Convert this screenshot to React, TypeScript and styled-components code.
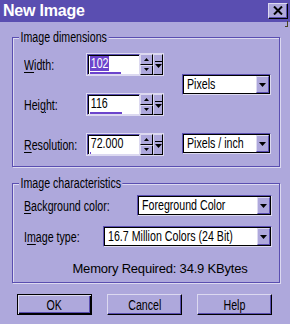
import styled, { createGlobalStyle } from "styled-components";

const face = "#aea8dc";
const shadow = "#5a4eb1";
const light = "#dcd9f0";
const select = "#6c44cc";

// the dialog font is a tall, narrow sans; Liberation Sans squeezed to fit
const narrow = `
  display: inline-block;
  white-space: nowrap;
  font-size: 14px;
  transform: scaleX(0.76);
`;

const GlobalStyle = createGlobalStyle`
  html, body {
    margin: 0;
    padding: 0;
    background: ${face};
  }
  body {
    font-family: "Liberation Sans", Arial, sans-serif;
    font-size: 13px;
    color: #000;
  }
`;

function DownArrow() {
  return (
    <svg width="7" height="4" viewBox="0 0 7 4">
      <path d="M0 0h7L3.5 4z" fill="#000" />
    </svg>
  );
}

function UpArrow() {
  return (
    <svg width="5" height="3" viewBox="0 0 5 3">
      <path d="M0 3h5L2.5 0z" fill="#000" />
    </svg>
  );
}

function SmallDown() {
  return (
    <svg width="5" height="3" viewBox="0 0 5 3">
      <path d="M0 0h5L2.5 3z" fill="#000" />
    </svg>
  );
}

function BarArrow() {
  return (
    <svg width="7" height="7" viewBox="0 0 7 7">
      <rect x="0" y="0" width="7" height="1" fill="#000" />
      <path d="M0 3h7L3.5 7z" fill="#000" />
    </svg>
  );
}

type SpinBoxProps = {
  value: string;
  progress: number;
  selected?: boolean;
};

function SpinBox({ value, progress, selected }: SpinBoxProps) {
  return (
    <SpinFrame>
      <Field>
        <FieldText $selected={selected}>{value}</FieldText>
        <Progress>
          <ProgressFill style={{ width: `${progress}%` }} />
        </Progress>
      </Field>
      <Spinner>
        <SpinButton>
          <UpArrow />
        </SpinButton>
        <SpinButton>
          <SmallDown />
        </SpinButton>
      </Spinner>
      <MiniButton>
        <BarArrow />
      </MiniButton>
    </SpinFrame>
  );
}

type DropdownProps = {
  value: string;
  $width?: number;
};

function Dropdown({ value, $width }: DropdownProps) {
  return (
    <SelectBox $width={$width}>
      <SelectText>
        <NarrowText>{value}</NarrowText>
      </SelectText>
      <ArrowButton>
        <DownArrow />
      </ArrowButton>
    </SelectBox>
  );
}

export default function App() {
  return (
    <>
      <GlobalStyle />
      <Dialog>
        <TitleBar>
          <Title>New Image</Title>
          <CloseButton>
            <svg width="10" height="9" viewBox="0 0 10 9">
              <path d="M1 0.5l8 8M9 0.5l-8 8" stroke="#000" strokeWidth="2" />
            </svg>
          </CloseButton>
        </TitleBar>
        <Corner />
        <Body>
          <Group>
            <Legend>Image dimensions</Legend>
            <DimGrid>
              <Label>
                <u>W</u>idth:
              </Label>
              <SpinBox value="102" progress={64} selected />
              <UnitCell $span>
                <Dropdown value="Pixels" />
              </UnitCell>
              <Label>
                Hei<u>g</u>ht:
              </Label>
              <SpinBox value="116" progress={66} />
              <Label>
                <u>R</u>esolution:
              </Label>
              <SpinBox value="72.000" progress={2} />
              <UnitCell>
                <Dropdown value="Pixels / inch" />
              </UnitCell>
            </DimGrid>
          </Group>
          <Group $gap={16}>
            <Legend>Image characteristics</Legend>
            <CharRow $top={4}>
              <Label>
                <u>B</u>ackground color:
              </Label>
              <Dropdown value="Foreground Color" $width={136} />
            </CharRow>
            <CharRow $top={10}>
              <Label>
                I<u>m</u>age type:
              </Label>
              <Dropdown value="16.7 Million Colors (24 Bit)" $width={169} />
            </CharRow>
            <Memory>Memory Required: 34.9 KBytes</Memory>
          </Group>
          <ButtonRow>
            <Button $default>
              <NarrowText $center>OK</NarrowText>
            </Button>
            <Button>
              <NarrowText $center>Cancel</NarrowText>
            </Button>
            <Button>
              <NarrowText $center>Help</NarrowText>
            </Button>
          </ButtonRow>
        </Body>
      </Dialog>
    </>
  );
}

const Dialog = styled.div`
  position: relative;
  width: 290px;
  height: 324px;
  background: ${face};
  overflow: hidden;
`;

const TitleBar = styled.div`
  height: 22px;
  background: ${shadow};
  display: flex;
  align-items: center;
  justify-content: space-between;
  padding: 0 2px 0 3px;
`;

const Title = styled.div`
  font-weight: bold;
  font-size: 16px;
  color: #fff;
  letter-spacing: -0.2px;
`;

const CloseButton = styled.div`
  width: 18px;
  height: 14px;
  background: ${face};
  border: 1px solid;
  border-color: ${light} #000 #000 ${light};
  box-shadow: inset -1px -1px 0 ${shadow};
  display: flex;
  align-items: center;
  justify-content: center;
  margin-top: -1px;
`;

const Corner = styled.div`
  position: absolute;
  top: 21px;
  right: 2px;
  width: 2px;
  height: 5px;
  border-right: 1px solid #4a4420;
  border-bottom: 1px solid #4a4420;
`;

const Body = styled.div`
  padding: 0 10px 0 12px;
`;

const Group = styled.div<{ $gap?: number }>`
  margin-top: ${(p) => p.$gap ?? 15}px;
  border: 1px solid ${shadow};
  box-shadow: inset 1px 1px 0 ${light}, 1px 1px 0 ${light};
  padding: 0 7px 10px 11px;
`;

const Legend = styled.div`
  ${narrow}
  transform-origin: left center;
  display: block;
  width: fit-content;
  margin: -8px 0 0 -5px;
  padding: 0 2px;
  height: 15px;
  line-height: 15px;
  background: ${face};
  position: relative;
`;

const DimGrid = styled.div`
  margin-top: 8px;
  display: grid;
  grid-template-columns: 62px 96px 89px;
  grid-template-rows: 23px 23px 23px;
  row-gap: 17px;
  align-items: center;
`;

const Label = styled.div`
  ${narrow}
  transform-origin: left center;
  u {
    text-decoration-thickness: 1px;
    text-underline-offset: 2px;
  }
`;

const NarrowText = styled.span<{ $center?: boolean }>`
  ${narrow}
  transform-origin: ${(p) => (p.$center ? "center" : "left")} center;
`;

const UnitCell = styled.div<{ $span?: boolean }>`
  grid-column: 3;
  grid-row: ${(p) => (p.$span ? "1 / span 2" : "3")};
  align-self: ${(p) => (p.$span ? "center" : "start")};
`;

const SpinFrame = styled.div`
  width: 78px;
  height: 23px;
  box-sizing: border-box;
  display: flex;
  border: 1px solid ${light};
`;

const Field = styled.div`
  width: 53px;
  box-sizing: border-box;
  background: #fff;
  border: 1px solid;
  border-color: ${shadow} ${light} ${light} ${shadow};
  box-shadow: inset 1px 1px 0 #000;
  padding: 1px 0 0 2px;
  display: flex;
  flex-direction: column;
  justify-content: space-between;
`;

const FieldText = styled.span<{ $selected?: boolean }>`
  ${narrow}
  transform-origin: left center;
  align-self: flex-start;
  line-height: 15px;
  padding: 0 1px;
  background: ${(p) => (p.$selected ? select : "transparent")};
  color: ${(p) => (p.$selected ? "#fff" : "#000")};
`;

const Progress = styled.div`
  height: 2px;
`;

const ProgressFill = styled.div`
  height: 100%;
  background: ${select};
`;

const Spinner = styled.div`
  width: 13px;
  display: flex;
  flex-direction: column;
`;

const SpinButton = styled.div`
  flex: 1;
  background: ${face};
  border: 1px solid;
  border-color: ${light} #000 #000 ${light};
  display: flex;
  align-items: center;
  justify-content: center;
`;

const MiniButton = styled.div`
  width: 10px;
  box-sizing: border-box;
  background: ${face};
  border: 1px solid;
  border-color: ${light} #000 #000 ${light};
  display: flex;
  align-items: center;
  justify-content: center;
`;

const SelectBox = styled.div<{ $width?: number }>`
  width: ${(p) => (p.$width ? `${p.$width}px` : "89px")};
  height: 21px;
  box-sizing: border-box;
  background: #fff;
  border: 1px solid;
  border-color: ${shadow} ${light} ${light} ${shadow};
  box-shadow: inset 1px 1px 0 #000, inset -1px -1px 0 #000;
  display: flex;
  align-items: stretch;
  padding: 1px;
`;

const SelectText = styled.div`
  flex: 1;
  min-width: 0;
  padding-left: 3px;
  line-height: 17px;
  white-space: nowrap;
  overflow: hidden;
`;

const ArrowButton = styled.div`
  width: 13px;
  flex: none;
  box-sizing: border-box;
  background: ${face};
  border: 1px solid;
  border-color: ${light} ${shadow} ${shadow} ${light};
  display: flex;
  align-items: center;
  justify-content: center;
`;

const CharRow = styled.div<{ $top: number }>`
  margin-top: ${(p) => p.$top}px;
  display: flex;
  align-items: center;
  justify-content: space-between;
`;

const Memory = styled.div`
  margin-top: 14px;
  margin-bottom: -4px;
  padding-left: 24px;
  text-align: center;
  line-height: 15px;
  letter-spacing: -0.2px;
`;

const ButtonRow = styled.div`
  margin-top: 11px;
  margin-left: 5px;
  display: flex;
  gap: 15px;
`;

const Button = styled.div<{ $default?: boolean }>`
  width: 75px;
  height: 21px;
  box-sizing: border-box;
  display: flex;
  align-items: center;
  justify-content: center;
  background: ${face};
  border: 1px solid;
  border-color: ${(p) => (p.$default ? "#000" : `${light} #000 #000 ${light}`)};
  box-shadow: ${(p) =>
    p.$default
      ? `inset 1px 1px 0 ${light}, inset -1px -1px 0 #000, inset -2px -2px 0 ${shadow}`
      : `inset -1px -1px 0 ${shadow}`};
`;
